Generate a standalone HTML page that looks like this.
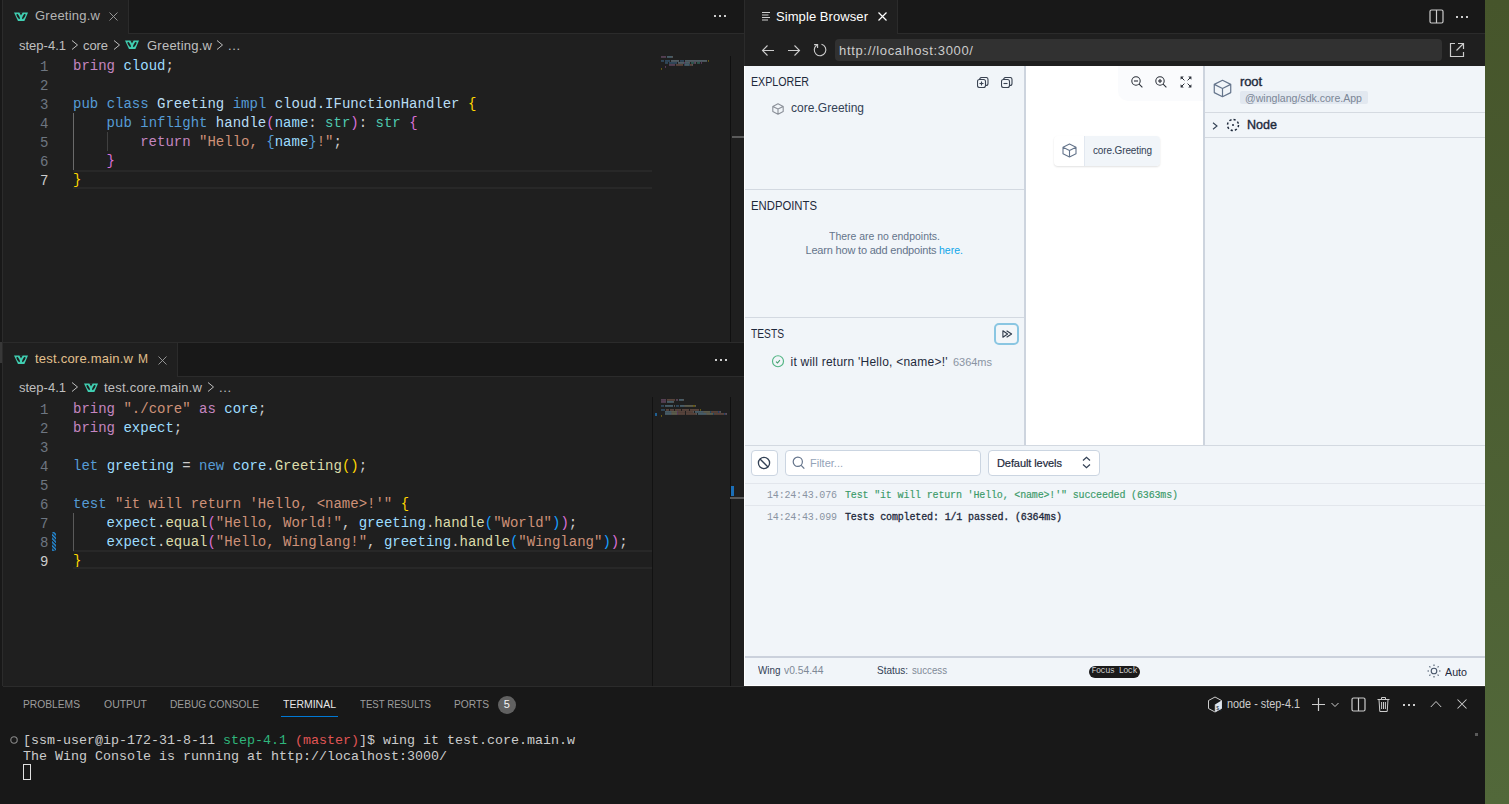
<!DOCTYPE html><html><head><meta charset="utf-8"><style>
html,body{margin:0;padding:0;width:1509px;height:804px;overflow:hidden;background:#1f1f1f;}
.t{position:absolute;white-space:pre;}
.r{position:absolute;}
</style></head><body>
<div class="r" style="left:0px;top:0px;width:744px;height:342px;background:#1f1f1f;"></div>
<div class="r" style="left:0px;top:0px;width:744px;height:33px;background:#181818;"></div>
<div class="r" style="left:128px;top:33px;width:616px;height:1px;background:#2b2b2b;"></div>
<div class="r" style="left:3px;top:0px;width:125px;height:33px;background:#1f1f1f;"></div>
<div class="r" style="left:128px;top:0px;width:1px;height:33px;background:#2b2b2b;"></div>
<div class="r" style="left:0px;top:342px;width:744px;height:344px;background:#1f1f1f;"></div>
<div class="r" style="left:0px;top:342px;width:744px;height:1px;background:#2b2b2b;"></div>
<div class="r" style="left:0px;top:343px;width:744px;height:33px;background:#181818;"></div>
<div class="r" style="left:177px;top:376px;width:567px;height:1px;background:#2b2b2b;"></div>
<div class="r" style="left:3px;top:343px;width:174px;height:33px;background:#1f1f1f;"></div>
<div class="r" style="left:177px;top:343px;width:1px;height:33px;background:#2b2b2b;"></div>
<div class="r" style="left:2px;top:0px;width:1px;height:804px;background:#2b2b2b;"></div>
<div class="r" style="left:0px;top:0px;width:2px;height:804px;background:#181818;"></div>
<div class="r" style="left:0px;top:342px;width:2px;height:21px;background:#383838;"></div>
<div class="r" style="left:744px;top:0px;width:1px;height:686px;background:#2b2b2b;"></div>
<div class="t" style="left:40px;top:57.97px;font-family:'Liberation Mono', monospace;font-size:14px;line-height:19.60px;color:#6e7681;font-weight:400;letter-spacing:0px;">1</div>
<div class="t" style="left:73px;top:57.17px;font-family:'Liberation Mono', monospace;font-size:14px;line-height:19.60px;color:#cccccc;font-weight:400;letter-spacing:0px;"><span style="color:#C586C0">bring</span><span style="color:#CCCCCC"> </span><span style="color:#9CDCFE">cloud</span><span style="color:#CCCCCC">;</span></div>
<div class="t" style="left:40px;top:76.97px;font-family:'Liberation Mono', monospace;font-size:14px;line-height:19.60px;color:#6e7681;font-weight:400;letter-spacing:0px;">2</div>
<div class="t" style="left:40px;top:95.97px;font-family:'Liberation Mono', monospace;font-size:14px;line-height:19.60px;color:#6e7681;font-weight:400;letter-spacing:0px;">3</div>
<div class="t" style="left:73px;top:95.17px;font-family:'Liberation Mono', monospace;font-size:14px;line-height:19.60px;color:#cccccc;font-weight:400;letter-spacing:0px;"><span style="color:#569CD6">pub</span><span style="color:#CCCCCC"> </span><span style="color:#569CD6">class</span><span style="color:#CCCCCC"> </span><span style="color:#B8DDF4">Greeting</span><span style="color:#CCCCCC"> </span><span style="color:#569CD6">impl</span><span style="color:#CCCCCC"> </span><span style="color:#B8DDF4">cloud.IFunctionHandler</span><span style="color:#CCCCCC"> </span><span style="color:#FFD700">{</span></div>
<div class="t" style="left:40px;top:114.97px;font-family:'Liberation Mono', monospace;font-size:14px;line-height:19.60px;color:#6e7681;font-weight:400;letter-spacing:0px;">4</div>
<div class="t" style="left:73px;top:114.17px;font-family:'Liberation Mono', monospace;font-size:14px;line-height:19.60px;color:#cccccc;font-weight:400;letter-spacing:0px;"><span style="color:#CCCCCC">    </span><span style="color:#569CD6">pub</span><span style="color:#CCCCCC"> </span><span style="color:#569CD6">inflight</span><span style="color:#CCCCCC"> </span><span style="color:#B8DDF4">handle</span><span style="color:#DA70D6">(</span><span style="color:#9CDCFE">name</span><span style="color:#CCCCCC">: </span><span style="color:#4EC9B0">str</span><span style="color:#DA70D6">)</span><span style="color:#CCCCCC">: </span><span style="color:#4EC9B0">str</span><span style="color:#CCCCCC"> </span><span style="color:#DA70D6">{</span></div>
<div class="t" style="left:40px;top:133.97px;font-family:'Liberation Mono', monospace;font-size:14px;line-height:19.60px;color:#6e7681;font-weight:400;letter-spacing:0px;">5</div>
<div class="t" style="left:73px;top:133.17px;font-family:'Liberation Mono', monospace;font-size:14px;line-height:19.60px;color:#cccccc;font-weight:400;letter-spacing:0px;"><span style="color:#CCCCCC">        </span><span style="color:#C586C0">return</span><span style="color:#CCCCCC"> </span><span style="color:#CE9178">&quot;Hello, </span><span style="color:#569CD6">{</span><span style="color:#9CDCFE">name</span><span style="color:#569CD6">}</span><span style="color:#CE9178">!&quot;</span><span style="color:#CCCCCC">;</span></div>
<div class="t" style="left:40px;top:152.97px;font-family:'Liberation Mono', monospace;font-size:14px;line-height:19.60px;color:#6e7681;font-weight:400;letter-spacing:0px;">6</div>
<div class="t" style="left:73px;top:152.17px;font-family:'Liberation Mono', monospace;font-size:14px;line-height:19.60px;color:#cccccc;font-weight:400;letter-spacing:0px;"><span style="color:#CCCCCC">    </span><span style="color:#DA70D6">}</span></div>
<div class="t" style="left:40px;top:171.97px;font-family:'Liberation Mono', monospace;font-size:14px;line-height:19.60px;color:#cccccc;font-weight:400;letter-spacing:0px;">7</div>
<div class="t" style="left:73px;top:171.17px;font-family:'Liberation Mono', monospace;font-size:14px;line-height:19.60px;color:#cccccc;font-weight:400;letter-spacing:0px;"><span style="color:#FFD700">}</span></div>
<div class="t" style="left:40px;top:400.97px;font-family:'Liberation Mono', monospace;font-size:14px;line-height:19.60px;color:#6e7681;font-weight:400;letter-spacing:0px;">1</div>
<div class="t" style="left:73px;top:400.17px;font-family:'Liberation Mono', monospace;font-size:14px;line-height:19.60px;color:#cccccc;font-weight:400;letter-spacing:0px;"><span style="color:#C586C0">bring</span><span style="color:#CCCCCC"> </span><span style="color:#CE9178">&quot;./core&quot;</span><span style="color:#CCCCCC"> </span><span style="color:#C586C0">as</span><span style="color:#CCCCCC"> </span><span style="color:#9CDCFE">core</span><span style="color:#CCCCCC">;</span></div>
<div class="t" style="left:40px;top:419.97px;font-family:'Liberation Mono', monospace;font-size:14px;line-height:19.60px;color:#6e7681;font-weight:400;letter-spacing:0px;">2</div>
<div class="t" style="left:73px;top:419.17px;font-family:'Liberation Mono', monospace;font-size:14px;line-height:19.60px;color:#cccccc;font-weight:400;letter-spacing:0px;"><span style="color:#C586C0">bring</span><span style="color:#CCCCCC"> </span><span style="color:#9CDCFE">expect</span><span style="color:#CCCCCC">;</span></div>
<div class="t" style="left:40px;top:438.97px;font-family:'Liberation Mono', monospace;font-size:14px;line-height:19.60px;color:#6e7681;font-weight:400;letter-spacing:0px;">3</div>
<div class="t" style="left:40px;top:457.97px;font-family:'Liberation Mono', monospace;font-size:14px;line-height:19.60px;color:#6e7681;font-weight:400;letter-spacing:0px;">4</div>
<div class="t" style="left:73px;top:457.17px;font-family:'Liberation Mono', monospace;font-size:14px;line-height:19.60px;color:#cccccc;font-weight:400;letter-spacing:0px;"><span style="color:#569CD6">let</span><span style="color:#CCCCCC"> </span><span style="color:#9CDCFE">greeting</span><span style="color:#CCCCCC"> = </span><span style="color:#569CD6">new</span><span style="color:#CCCCCC"> </span><span style="color:#9CDCFE">core</span><span style="color:#CCCCCC">.</span><span style="color:#DCDCAA">Greeting</span><span style="color:#FFD700">()</span><span style="color:#CCCCCC">;</span></div>
<div class="t" style="left:40px;top:476.97px;font-family:'Liberation Mono', monospace;font-size:14px;line-height:19.60px;color:#6e7681;font-weight:400;letter-spacing:0px;">5</div>
<div class="t" style="left:40px;top:495.97px;font-family:'Liberation Mono', monospace;font-size:14px;line-height:19.60px;color:#6e7681;font-weight:400;letter-spacing:0px;">6</div>
<div class="t" style="left:73px;top:495.17px;font-family:'Liberation Mono', monospace;font-size:14px;line-height:19.60px;color:#cccccc;font-weight:400;letter-spacing:0px;"><span style="color:#569CD6">test</span><span style="color:#CCCCCC"> </span><span style="color:#CE9178">&quot;it will return &#x27;Hello, &lt;name&gt;!&#x27;&quot;</span><span style="color:#CCCCCC"> </span><span style="color:#FFD700">{</span></div>
<div class="t" style="left:40px;top:514.97px;font-family:'Liberation Mono', monospace;font-size:14px;line-height:19.60px;color:#6e7681;font-weight:400;letter-spacing:0px;">7</div>
<div class="t" style="left:73px;top:514.17px;font-family:'Liberation Mono', monospace;font-size:14px;line-height:19.60px;color:#cccccc;font-weight:400;letter-spacing:0px;"><span style="color:#CCCCCC">    </span><span style="color:#9CDCFE">expect</span><span style="color:#CCCCCC">.</span><span style="color:#DCDCAA">equal</span><span style="color:#DA70D6">(</span><span style="color:#CE9178">&quot;Hello, World!&quot;</span><span style="color:#CCCCCC">, </span><span style="color:#9CDCFE">greeting</span><span style="color:#CCCCCC">.</span><span style="color:#DCDCAA">handle</span><span style="color:#179FFF">(</span><span style="color:#CE9178">&quot;World&quot;</span><span style="color:#179FFF">)</span><span style="color:#DA70D6">)</span><span style="color:#CCCCCC">;</span></div>
<div class="t" style="left:40px;top:533.97px;font-family:'Liberation Mono', monospace;font-size:14px;line-height:19.60px;color:#6e7681;font-weight:400;letter-spacing:0px;">8</div>
<div class="t" style="left:73px;top:533.17px;font-family:'Liberation Mono', monospace;font-size:14px;line-height:19.60px;color:#cccccc;font-weight:400;letter-spacing:0px;"><span style="color:#CCCCCC">    </span><span style="color:#9CDCFE">expect</span><span style="color:#CCCCCC">.</span><span style="color:#DCDCAA">equal</span><span style="color:#DA70D6">(</span><span style="color:#CE9178">&quot;Hello, Winglang!&quot;</span><span style="color:#CCCCCC">, </span><span style="color:#9CDCFE">greeting</span><span style="color:#CCCCCC">.</span><span style="color:#DCDCAA">handle</span><span style="color:#179FFF">(</span><span style="color:#CE9178">&quot;Winglang&quot;</span><span style="color:#179FFF">)</span><span style="color:#DA70D6">)</span><span style="color:#CCCCCC">;</span></div>
<div class="t" style="left:40px;top:552.97px;font-family:'Liberation Mono', monospace;font-size:14px;line-height:19.60px;color:#cccccc;font-weight:400;letter-spacing:0px;">9</div>
<div class="t" style="left:73px;top:552.17px;font-family:'Liberation Mono', monospace;font-size:14px;line-height:19.60px;color:#cccccc;font-weight:400;letter-spacing:0px;"><span style="color:#FFD700">}</span></div>
<svg class="r" style="left:14px;top:12px;" width="14" height="10" viewBox="0 0 14 10"><path fill="#40cfb2" d="M0,0.6 L14,0.6 L10.4,9.1 L4,9.1 Z"/><path fill="#1f1f1f" d="M5.2,0.3 L8.8,0.3 L7,3.4 Z"/><ellipse cx="4.2" cy="4.5" rx="1.05" ry="3.0" transform="rotate(-30 4.2 4.5)" fill="#1f1f1f"/><ellipse cx="9.8" cy="4.5" rx="1.05" ry="3.0" transform="rotate(30 9.8 4.5)" fill="#1f1f1f"/></svg>
<div class="t" style="left:35px;top:7.40px;font-family:'Liberation Sans', sans-serif;font-size:13px;line-height:18.20px;color:#b4b4b4;font-weight:400;letter-spacing:0.236px;">Greeting.w</div>
<svg class="r" style="left:109px;top:12px;" width="9" height="9" viewBox="0 0 9 9"><path d="M0.5,0.5 L8.5,8.5 M8.5,0.5 L0.5,8.5" stroke="#a0a0a0" stroke-width="0.9" fill="none"/></svg>
<div class="r" style="left:714px;top:15px;width:2px;height:2px;background:#cccccc;"></div>
<div class="r" style="left:719px;top:15px;width:2px;height:2px;background:#cccccc;"></div>
<div class="r" style="left:724px;top:15px;width:2px;height:2px;background:#cccccc;"></div>
<div class="t" style="left:19px;top:36.90px;font-family:'Liberation Sans', sans-serif;font-size:13px;line-height:18.20px;color:#bfbfbf;font-weight:400;letter-spacing:0.002px;">step-4.1</div>
<svg class="r" style="left:71px;top:40px;" width="8.0" height="10" viewBox="0 0 8.0 10"><path d="M1,0.5 L6.5,5.0 L1,9.5" stroke="#bfbfbf" stroke-width="1" fill="none"/></svg>
<div class="t" style="left:83px;top:36.90px;font-family:'Liberation Sans', sans-serif;font-size:13px;line-height:18.20px;color:#bfbfbf;font-weight:400;letter-spacing:-0.099px;">core</div>
<svg class="r" style="left:112.5px;top:40px;" width="8.0" height="10" viewBox="0 0 8.0 10"><path d="M1,0.5 L6.5,5.0 L1,9.5" stroke="#bfbfbf" stroke-width="1" fill="none"/></svg>
<svg class="r" style="left:125px;top:40px;" width="14" height="10" viewBox="0 0 14 10"><path fill="#40cfb2" d="M0,0.6 L14,0.6 L10.4,9.1 L4,9.1 Z"/><path fill="#1f1f1f" d="M5.2,0.3 L8.8,0.3 L7,3.4 Z"/><ellipse cx="4.2" cy="4.5" rx="1.05" ry="3.0" transform="rotate(-30 4.2 4.5)" fill="#1f1f1f"/><ellipse cx="9.8" cy="4.5" rx="1.05" ry="3.0" transform="rotate(30 9.8 4.5)" fill="#1f1f1f"/></svg>
<div class="t" style="left:147px;top:36.90px;font-family:'Liberation Sans', sans-serif;font-size:13px;line-height:18.20px;color:#bfbfbf;font-weight:400;letter-spacing:0.236px;">Greeting.w</div>
<svg class="r" style="left:215.5px;top:40px;" width="8.0" height="10" viewBox="0 0 8.0 10"><path d="M1,0.5 L6.5,5.0 L1,9.5" stroke="#bfbfbf" stroke-width="1" fill="none"/></svg>
<div class="t" style="left:228px;top:36.90px;font-family:'Liberation Sans', sans-serif;font-size:13px;line-height:18.20px;color:#bfbfbf;font-weight:400;letter-spacing:0.578px;">...</div>
<svg class="r" style="left:14px;top:355px;" width="14" height="10" viewBox="0 0 14 10"><path fill="#40cfb2" d="M0,0.6 L14,0.6 L10.4,9.1 L4,9.1 Z"/><path fill="#1f1f1f" d="M5.2,0.3 L8.8,0.3 L7,3.4 Z"/><ellipse cx="4.2" cy="4.5" rx="1.05" ry="3.0" transform="rotate(-30 4.2 4.5)" fill="#1f1f1f"/><ellipse cx="9.8" cy="4.5" rx="1.05" ry="3.0" transform="rotate(30 9.8 4.5)" fill="#1f1f1f"/></svg>
<div class="t" style="left:35px;top:350.40px;font-family:'Liberation Sans', sans-serif;font-size:13px;line-height:18.20px;color:#e2c08d;font-weight:400;letter-spacing:0.223px;">test.core.main.w</div>
<div class="t" style="left:138px;top:351.44px;font-family:'Liberation Sans', sans-serif;font-size:12px;line-height:16.80px;color:#e2c08d;font-weight:400;letter-spacing:0.0px;">M</div>
<svg class="r" style="left:158px;top:356px;" width="9" height="9" viewBox="0 0 9 9"><path d="M0.5,0.5 L8.5,8.5 M8.5,0.5 L0.5,8.5" stroke="#a0a0a0" stroke-width="0.9" fill="none"/></svg>
<div class="r" style="left:715px;top:359px;width:2px;height:2px;background:#cccccc;"></div>
<div class="r" style="left:720px;top:359px;width:2px;height:2px;background:#cccccc;"></div>
<div class="r" style="left:725px;top:359px;width:2px;height:2px;background:#cccccc;"></div>
<div class="t" style="left:19px;top:378.90px;font-family:'Liberation Sans', sans-serif;font-size:13px;line-height:18.20px;color:#bfbfbf;font-weight:400;letter-spacing:0.002px;">step-4.1</div>
<svg class="r" style="left:71px;top:382px;" width="8.0" height="10" viewBox="0 0 8.0 10"><path d="M1,0.5 L6.5,5.0 L1,9.5" stroke="#bfbfbf" stroke-width="1" fill="none"/></svg>
<svg class="r" style="left:84px;top:383px;" width="14" height="10" viewBox="0 0 14 10"><path fill="#40cfb2" d="M0,0.6 L14,0.6 L10.4,9.1 L4,9.1 Z"/><path fill="#1f1f1f" d="M5.2,0.3 L8.8,0.3 L7,3.4 Z"/><ellipse cx="4.2" cy="4.5" rx="1.05" ry="3.0" transform="rotate(-30 4.2 4.5)" fill="#1f1f1f"/><ellipse cx="9.8" cy="4.5" rx="1.05" ry="3.0" transform="rotate(30 9.8 4.5)" fill="#1f1f1f"/></svg>
<div class="t" style="left:104px;top:378.90px;font-family:'Liberation Sans', sans-serif;font-size:13px;line-height:18.20px;color:#bfbfbf;font-weight:400;letter-spacing:0.223px;">test.core.main.w</div>
<svg class="r" style="left:206.5px;top:382px;" width="8.0" height="10" viewBox="0 0 8.0 10"><path d="M1,0.5 L6.5,5.0 L1,9.5" stroke="#bfbfbf" stroke-width="1" fill="none"/></svg>
<div class="t" style="left:219px;top:378.90px;font-family:'Liberation Sans', sans-serif;font-size:13px;line-height:18.20px;color:#bfbfbf;font-weight:400;letter-spacing:0.578px;">...</div>
<div class="r" style="left:73px;top:170px;width:579px;height:2px;background:#282828;"></div>
<div class="r" style="left:73px;top:187px;width:579px;height:2px;background:#282828;"></div>
<div class="r" style="left:73px;top:550px;width:579px;height:2px;background:#282828;"></div>
<div class="r" style="left:73px;top:567px;width:579px;height:2px;background:#282828;"></div>
<div class="r" style="left:73px;top:113px;width:1px;height:57px;background:#6a6a6a;"></div>
<div class="r" style="left:107px;top:132px;width:1px;height:19px;background:#404040;"></div>
<div class="r" style="left:73px;top:513px;width:1px;height:38px;background:#5a5a5a;"></div>
<svg class="r" style="left:52px;top:532px;" width="4" height="19" viewBox="0 0 4 19"><defs><pattern id="st" width="2.6" height="2.6" patternUnits="userSpaceOnUse" patternTransform="rotate(-45)"><rect width="1.5" height="2.6" fill="#2389d6"/></pattern></defs><rect width="4" height="19" fill="url(#st)"/></svg>
<div class="r" style="left:730px;top:56px;width:14px;height:286px;background:#1f1f1f;box-shadow:inset 1px 0 0 #101010;"></div>
<div class="r" style="left:732px;top:136px;width:12px;height:2px;background:#5a5a5a;"></div>
<div class="r" style="left:652px;top:397px;width:1px;height:289px;background:#121212;"></div>
<div class="r" style="left:730px;top:397px;width:14px;height:289px;background:#1f1f1f;box-shadow:inset 1px 0 0 #101010;"></div>
<div class="r" style="left:731px;top:486px;width:3px;height:10px;background:#1b6fb8;"></div>
<div class="r" style="left:655px;top:413px;width:2px;height:3px;background:#1f5f92;"></div>
<div class="r" style="left:730px;top:497px;width:14px;height:2px;background:#5a5a5a;"></div>
<svg class="r" style="left:661px;top:56px;opacity:0.4;" width="80" height="14" viewBox="0 0 80 14"><rect x="0" y="0.2" width="5" height="1.5" fill="#C586C0"/><rect x="6" y="0.2" width="5" height="1.5" fill="#9CDCFE"/><rect x="11" y="0.2" width="1" height="1.5" fill="#CCCCCC"/><rect x="0" y="4.2" width="3" height="1.5" fill="#569CD6"/><rect x="4" y="4.2" width="5" height="1.5" fill="#569CD6"/><rect x="10" y="4.2" width="8" height="1.5" fill="#B8DDF4"/><rect x="19" y="4.2" width="4" height="1.5" fill="#569CD6"/><rect x="24" y="4.2" width="22" height="1.5" fill="#B8DDF4"/><rect x="47" y="4.2" width="1" height="1.5" fill="#FFD700"/><rect x="4" y="6.2" width="3" height="1.5" fill="#569CD6"/><rect x="8" y="6.2" width="8" height="1.5" fill="#569CD6"/><rect x="17" y="6.2" width="6" height="1.5" fill="#B8DDF4"/><rect x="23" y="6.2" width="1" height="1.5" fill="#DA70D6"/><rect x="24" y="6.2" width="4" height="1.5" fill="#9CDCFE"/><rect x="28" y="6.2" width="1" height="1.5" fill="#CCCCCC"/><rect x="30" y="6.2" width="3" height="1.5" fill="#4EC9B0"/><rect x="33" y="6.2" width="1" height="1.5" fill="#DA70D6"/><rect x="34" y="6.2" width="1" height="1.5" fill="#CCCCCC"/><rect x="36" y="6.2" width="3" height="1.5" fill="#4EC9B0"/><rect x="40" y="6.2" width="1" height="1.5" fill="#DA70D6"/><rect x="8" y="8.2" width="6" height="1.5" fill="#C586C0"/><rect x="15" y="8.2" width="7" height="1.5" fill="#CE9178"/><rect x="23" y="8.2" width="1" height="1.5" fill="#569CD6"/><rect x="24" y="8.2" width="4" height="1.5" fill="#9CDCFE"/><rect x="28" y="8.2" width="1" height="1.5" fill="#569CD6"/><rect x="29" y="8.2" width="2" height="1.5" fill="#CE9178"/><rect x="31" y="8.2" width="1" height="1.5" fill="#CCCCCC"/><rect x="4" y="10.2" width="1" height="1.5" fill="#DA70D6"/><rect x="0" y="12.2" width="1" height="1.5" fill="#FFD700"/></svg>
<svg class="r" style="left:661px;top:399px;opacity:0.4;" width="80" height="18" viewBox="0 0 80 18"><rect x="0" y="0.2" width="5" height="1.5" fill="#C586C0"/><rect x="6" y="0.2" width="8" height="1.5" fill="#CE9178"/><rect x="15" y="0.2" width="2" height="1.5" fill="#C586C0"/><rect x="18" y="0.2" width="4" height="1.5" fill="#9CDCFE"/><rect x="22" y="0.2" width="1" height="1.5" fill="#CCCCCC"/><rect x="0" y="2.2" width="5" height="1.5" fill="#C586C0"/><rect x="6" y="2.2" width="6" height="1.5" fill="#9CDCFE"/><rect x="12" y="2.2" width="1" height="1.5" fill="#CCCCCC"/><rect x="0" y="6.2" width="3" height="1.5" fill="#569CD6"/><rect x="4" y="6.2" width="8" height="1.5" fill="#9CDCFE"/><rect x="13" y="6.2" width="1" height="1.5" fill="#CCCCCC"/><rect x="15" y="6.2" width="3" height="1.5" fill="#569CD6"/><rect x="19" y="6.2" width="4" height="1.5" fill="#9CDCFE"/><rect x="23" y="6.2" width="1" height="1.5" fill="#CCCCCC"/><rect x="24" y="6.2" width="8" height="1.5" fill="#DCDCAA"/><rect x="32" y="6.2" width="2" height="1.5" fill="#FFD700"/><rect x="34" y="6.2" width="1" height="1.5" fill="#CCCCCC"/><rect x="0" y="10.2" width="4" height="1.5" fill="#569CD6"/><rect x="5" y="10.2" width="3" height="1.5" fill="#CE9178"/><rect x="9" y="10.2" width="4" height="1.5" fill="#CE9178"/><rect x="14" y="10.2" width="6" height="1.5" fill="#CE9178"/><rect x="21" y="10.2" width="7" height="1.5" fill="#CE9178"/><rect x="29" y="10.2" width="9" height="1.5" fill="#CE9178"/><rect x="39" y="10.2" width="1" height="1.5" fill="#FFD700"/><rect x="4" y="12.2" width="6" height="1.5" fill="#9CDCFE"/><rect x="10" y="12.2" width="1" height="1.5" fill="#CCCCCC"/><rect x="11" y="12.2" width="5" height="1.5" fill="#DCDCAA"/><rect x="16" y="12.2" width="1" height="1.5" fill="#DA70D6"/><rect x="17" y="12.2" width="7" height="1.5" fill="#CE9178"/><rect x="25" y="12.2" width="7" height="1.5" fill="#CE9178"/><rect x="32" y="12.2" width="1" height="1.5" fill="#CCCCCC"/><rect x="34" y="12.2" width="8" height="1.5" fill="#9CDCFE"/><rect x="42" y="12.2" width="1" height="1.5" fill="#CCCCCC"/><rect x="43" y="12.2" width="6" height="1.5" fill="#DCDCAA"/><rect x="49" y="12.2" width="1" height="1.5" fill="#179FFF"/><rect x="50" y="12.2" width="7" height="1.5" fill="#CE9178"/><rect x="57" y="12.2" width="1" height="1.5" fill="#179FFF"/><rect x="58" y="12.2" width="1" height="1.5" fill="#DA70D6"/><rect x="59" y="12.2" width="1" height="1.5" fill="#CCCCCC"/><rect x="4" y="14.2" width="6" height="1.5" fill="#9CDCFE"/><rect x="10" y="14.2" width="1" height="1.5" fill="#CCCCCC"/><rect x="11" y="14.2" width="5" height="1.5" fill="#DCDCAA"/><rect x="16" y="14.2" width="1" height="1.5" fill="#DA70D6"/><rect x="17" y="14.2" width="7" height="1.5" fill="#CE9178"/><rect x="25" y="14.2" width="10" height="1.5" fill="#CE9178"/><rect x="35" y="14.2" width="1" height="1.5" fill="#CCCCCC"/><rect x="37" y="14.2" width="8" height="1.5" fill="#9CDCFE"/><rect x="45" y="14.2" width="1" height="1.5" fill="#CCCCCC"/><rect x="46" y="14.2" width="6" height="1.5" fill="#DCDCAA"/><rect x="52" y="14.2" width="1" height="1.5" fill="#179FFF"/><rect x="53" y="14.2" width="10" height="1.5" fill="#CE9178"/><rect x="63" y="14.2" width="1" height="1.5" fill="#179FFF"/><rect x="64" y="14.2" width="1" height="1.5" fill="#DA70D6"/><rect x="65" y="14.2" width="1" height="1.5" fill="#CCCCCC"/><rect x="0" y="16.2" width="1" height="1.5" fill="#FFD700"/></svg>
<div class="r" style="left:0px;top:686px;width:1509px;height:118px;background:#181818;"></div>
<div class="r" style="left:3px;top:686px;width:1482px;height:1px;background:#2b2b2b;"></div>
<div class="t" style="left:23px;top:696.99px;font-family:'Liberation Sans', sans-serif;font-size:11px;line-height:15.40px;color:#9d9d9d;font-weight:400;letter-spacing:0px;transform:scaleX(0.9323);transform-origin:0 0;">PROBLEMS</div>
<div class="t" style="left:104px;top:696.99px;font-family:'Liberation Sans', sans-serif;font-size:11px;line-height:15.40px;color:#9d9d9d;font-weight:400;letter-spacing:0px;transform:scaleX(0.9506);transform-origin:0 0;">OUTPUT</div>
<div class="t" style="left:170px;top:696.99px;font-family:'Liberation Sans', sans-serif;font-size:11px;line-height:15.40px;color:#9d9d9d;font-weight:400;letter-spacing:0px;transform:scaleX(0.9274);transform-origin:0 0;">DEBUG CONSOLE</div>
<div class="t" style="left:283px;top:696.99px;font-family:'Liberation Sans', sans-serif;font-size:11px;line-height:15.40px;color:#e7e7e7;font-weight:400;letter-spacing:0px;transform:scaleX(0.9528);transform-origin:0 0;">TERMINAL</div>
<div class="r" style="left:281px;top:716px;width:57px;height:1px;background:#0078d4;"></div>
<div class="t" style="left:360px;top:696.99px;font-family:'Liberation Sans', sans-serif;font-size:11px;line-height:15.40px;color:#9d9d9d;font-weight:400;letter-spacing:0px;transform:scaleX(0.8777);transform-origin:0 0;">TEST RESULTS</div>
<div class="t" style="left:454px;top:696.99px;font-family:'Liberation Sans', sans-serif;font-size:11px;line-height:15.40px;color:#9d9d9d;font-weight:400;letter-spacing:0px;transform:scaleX(0.9283);transform-origin:0 0;">PORTS</div>
<div class="r" style="left:498px;top:696px;width:18px;height:18px;background:#616161;border-radius:9px;"></div>
<div class="t" style="left:503.8px;top:697.49px;font-family:'Liberation Sans', sans-serif;font-size:11px;line-height:15.40px;color:#f4f4f4;font-weight:400;letter-spacing:0px;">5</div>
<svg class="r" style="left:10px;top:736px;" width="8" height="8" viewBox="0 0 8 8"><circle cx="4" cy="4" r="3.2" fill="none" stroke="#8a8a8a" stroke-width="1.1"/></svg>
<div class="t" style="left:23px;top:732.11px;font-family:'Liberation Mono', monospace;font-size:13.333px;line-height:18.67px;color:#cccccc;font-weight:400;letter-spacing:0px;">[ssm-user@ip-172-31-8-11 <span style="color:#23d18b;color:#2fb67c">step-4.1</span> <span style="color:#f14c4c;color:#e05555">(master)</span>]$ wing it test.core.main.w</div>
<div class="t" style="left:23px;top:748.11px;font-family:'Liberation Mono', monospace;font-size:13.333px;line-height:18.67px;color:#cccccc;font-weight:400;letter-spacing:0px;">The Wing Console is running at http://localhost:3000/</div>
<div class="r" style="left:23px;top:764px;width:8px;height:16px;background:transparent;box-sizing:border-box;border:1px solid #e0e0e0;"></div>
<svg class="r" style="left:1207px;top:696px;" width="16" height="17" viewBox="0 0 16 17"><path d="M8,1 L14.5,4.5 L14.5,12.5 L8,16 L1.5,12.5 L1.5,4.5 Z" fill="none" stroke="#cccccc" stroke-width="1"/><path d="M8,8.5 L14.5,4.5 L14.5,12.5 L8,16 Z" fill="#dfe7f0"/><path d="M8,8.5 L8,16" stroke="#999" stroke-width="0.6"/><text x="9.3" y="14" font-size="5" fill="#234" font-family="Liberation Sans">$_</text></svg>
<div class="t" style="left:1227px;top:695.40px;font-family:'Liberation Sans', sans-serif;font-size:13px;line-height:18.20px;color:#cccccc;font-weight:400;letter-spacing:0px;transform:scaleX(0.8347);transform-origin:0 0;">node - step-4.1</div>
<svg class="r" style="left:1311px;top:697px;" width="15" height="15" viewBox="0 0 15 15"><path d="M7.5,1 V14 M1,7.5 H14" stroke="#cccccc" stroke-width="1.2" fill="none"/></svg>
<svg class="r" style="left:1331px;top:702px;" width="8" height="6" viewBox="0 0 8 6"><path d="M0.5,1 L4,4.5 L7.5,1" stroke="#cccccc" stroke-width="1" fill="none"/></svg>
<svg class="r" style="left:1351px;top:697px;" width="15" height="15" viewBox="0 0 15 15"><rect x="1" y="1" width="13" height="13" rx="1.5" fill="none" stroke="#cccccc" stroke-width="1.2"/><path d="M7.5,1 V14" stroke="#cccccc" stroke-width="1.2"/></svg>
<svg class="r" style="left:1377px;top:696px;" width="13" height="17" viewBox="0 0 13 17"><path d="M0.5,3.5 H12.5 M4.5,3.5 V1.5 H8.5 V3.5 M2,3.5 L2.8,15.5 H10.2 L11,3.5 M4.6,6 V13 M6.5,6 V13 M8.4,6 V13" stroke="#cccccc" stroke-width="1" fill="none"/></svg>
<div class="r" style="left:1403px;top:704px;width:2px;height:2px;background:#cccccc;"></div>
<div class="r" style="left:1408px;top:704px;width:2px;height:2px;background:#cccccc;"></div>
<div class="r" style="left:1413px;top:704px;width:2px;height:2px;background:#cccccc;"></div>
<svg class="r" style="left:1430px;top:700px;" width="12" height="8" viewBox="0 0 12 8"><path d="M0.8,7 L6,1.5 L11.2,7" stroke="#cccccc" stroke-width="1" fill="none"/></svg>
<svg class="r" style="left:1457px;top:699px;" width="10" height="10" viewBox="0 0 10 10"><path d="M0.5,0.5 L9.5,9.5 M9.5,0.5 L0.5,9.5" stroke="#cccccc" stroke-width="1.05" fill="none"/></svg>
<div class="r" style="left:1475px;top:733px;width:3px;height:3px;background:#5a5a5a;"></div>
<div class="r" style="left:745px;top:0px;width:740px;height:33px;background:#181818;"></div>
<div class="r" style="left:745px;top:0px;width:152px;height:33px;background:#1f1f1f;"></div>
<div class="r" style="left:897px;top:0px;width:1px;height:33px;background:#2b2b2b;"></div>
<div class="r" style="left:897px;top:33px;width:588px;height:1px;background:#2b2b2b;"></div>
<div class="r" style="left:745px;top:34px;width:740px;height:32px;background:#1f1f1f;"></div>
<svg class="r" style="left:762px;top:11px;" width="9" height="10" viewBox="0 0 9 10"><path d="M0,1.5 H8 M0,4 H6.5 M0,6.5 H8 M0,9 H6" stroke="#d0d0d0" stroke-width="1" fill="none"/></svg>
<div class="t" style="left:776px;top:7.60px;font-family:'Liberation Sans', sans-serif;font-size:13px;line-height:18.20px;color:#ffffff;font-weight:400;letter-spacing:0.075px;">Simple Browser</div>
<svg class="r" style="left:878px;top:12px;" width="9" height="9" viewBox="0 0 9 9"><path d="M0.5,0.5 L8.5,8.5 M8.5,0.5 L0.5,8.5" stroke="#ffffff" stroke-width="1.2" fill="none"/></svg>
<svg class="r" style="left:1429px;top:9px;" width="15" height="15" viewBox="0 0 15 15"><rect x="1" y="1" width="13" height="13" rx="1.5" fill="none" stroke="#cccccc" stroke-width="1.2"/><path d="M7.5,1 V14" stroke="#cccccc" stroke-width="1.2"/></svg>
<div class="r" style="left:1456px;top:16px;width:2px;height:2px;background:#cccccc;"></div>
<div class="r" style="left:1461px;top:16px;width:2px;height:2px;background:#cccccc;"></div>
<div class="r" style="left:1466px;top:16px;width:2px;height:2px;background:#cccccc;"></div>
<svg class="r" style="left:761px;top:44px;" width="14" height="13" viewBox="0 0 14 13"><path d="M13,6.5 H1.5 M6.5,1.5 L1.5,6.5 L6.5,11.5" stroke="#cccccc" stroke-width="1.1" fill="none"/></svg>
<svg class="r" style="left:787px;top:44px;" width="14" height="13" viewBox="0 0 14 13"><path d="M1,6.5 H12.5 M7.5,1.5 L12.5,6.5 L7.5,11.5" stroke="#cccccc" stroke-width="1.1" fill="none"/></svg>
<svg class="r" style="left:813px;top:42.7px;" width="15" height="15" viewBox="0 0 15 15"><path d="M8.5,1.3 A5.8,5.8 0 1 1 3.7,2.2 M1.1,1.6 H4.6 V5" stroke="#cccccc" stroke-width="1.1" fill="none"/></svg>
<div class="r" style="left:835px;top:39px;width:607px;height:22px;background:#313131;border-radius:4px;"></div>
<div class="t" style="left:839px;top:41.90px;font-family:'Liberation Sans', sans-serif;font-size:13px;line-height:18.20px;color:#cccccc;font-weight:400;letter-spacing:0.667px;">http://localhost:3000/</div>
<svg class="r" style="left:1449px;top:42px;" width="16" height="16" viewBox="0 0 16 16"><path d="M6,1.5 H1.5 V14.5 H14.5 V10 M9,1.5 H14.5 V7 M14.5,1.5 L7.5,8.5" stroke="#cccccc" stroke-width="1.2" fill="none"/></svg>
<div class="r" style="left:744px;top:66px;width:741px;height:620px;background:#f1f5f9;"></div>
<div class="r" style="left:1026px;top:66px;width:177px;height:379px;background:#ffffff;"></div>
<div class="r" style="left:1024px;top:66px;width:2px;height:379px;background:#cdd4de;"></div>
<div class="r" style="left:1203px;top:66px;width:2px;height:379px;background:#cdd4de;"></div>
<div class="r" style="left:744px;top:189px;width:280px;height:1px;background:#d3d9e1;"></div>
<div class="r" style="left:744px;top:317px;width:280px;height:1px;background:#d3d9e1;"></div>
<div class="r" style="left:744px;top:445px;width:741px;height:1px;background:#d3d9e1;"></div>
<div class="r" style="left:1205px;top:112px;width:280px;height:1px;background:#d5dae1;"></div>
<div class="r" style="left:1205px;top:137px;width:280px;height:1px;background:#d5dae1;"></div>
<div class="r" style="left:744px;top:483px;width:741px;height:1px;background:#e2e6ec;"></div>
<div class="r" style="left:744px;top:505px;width:741px;height:1px;background:#e2e6ec;"></div>
<div class="r" style="left:744px;top:656px;width:741px;height:2px;background:#cbd1dc;"></div>
<div class="r" style="left:744px;top:66px;width:1px;height:620px;background:#ffffff;"></div>
<div class="r" style="left:744px;top:685px;width:741px;height:1px;background:#ffffff;"></div>
<div class="t" style="left:751px;top:73.54px;font-family:'Liberation Sans', sans-serif;font-size:12px;line-height:16.80px;color:#1e293b;font-weight:400;letter-spacing:0px;transform:scaleX(0.8874);transform-origin:0 0;">EXPLORER</div>
<svg class="r" style="left:976.5px;top:76.5px;" width="12" height="12" viewBox="0 0 12 12"><rect x="0.5" y="2.5" width="8" height="8" rx="2" fill="none" stroke="#3a4352" stroke-width="1.1"/><path d="M2.6,2.5 A2,2 0 0 1 4.6,0.5 H9 A2,2 0 0 1 11,2.5 V6.5 A2,2 0 0 1 9,8.5 H8.5" fill="none" stroke="#3a4352" stroke-width="1.1"/><path d="M2.5,6.5 H6.5" stroke="#3a4352" stroke-width="1.1"/><path d="M4.5,4.5 V8.5" stroke="#3a4352" stroke-width="1.1"/></svg>
<svg class="r" style="left:1001px;top:76.5px;" width="12" height="12" viewBox="0 0 12 12"><rect x="0.5" y="2.5" width="8" height="8" rx="2" fill="none" stroke="#3a4352" stroke-width="1.1"/><path d="M2.6,2.5 A2,2 0 0 1 4.6,0.5 H9 A2,2 0 0 1 11,2.5 V6.5 A2,2 0 0 1 9,8.5 H8.5" fill="none" stroke="#3a4352" stroke-width="1.1"/><path d="M2.5,6.5 H6.5" stroke="#3a4352" stroke-width="1.1"/></svg>
<svg class="r" style="left:772px;top:103px;" width="12" height="12" viewBox="0 0 12 12"><g transform="scale(1.0)"><path d="M6,0.8 L11.2,3.4 V8.6 L6,11.2 L0.8,8.6 V3.4 Z M0.8,3.4 L6,6 L11.2,3.4 M6,6 V11.2" fill="none" stroke="#8b9099" stroke-width="1.10" stroke-linejoin="round"/></g></svg>
<div class="t" style="left:791px;top:99.94px;font-family:'Liberation Sans', sans-serif;font-size:12px;line-height:16.80px;color:#334155;font-weight:400;letter-spacing:0.025px;">core.Greeting</div>
<div class="t" style="left:751px;top:197.94px;font-family:'Liberation Sans', sans-serif;font-size:12px;line-height:16.80px;color:#1e293b;font-weight:400;letter-spacing:0px;transform:scaleX(0.9426);transform-origin:0 0;">ENDPOINTS</div>
<div class="t" style="left:828.5px;top:228.79px;font-family:'Liberation Sans', sans-serif;font-size:11px;line-height:15.40px;color:#64748b;font-weight:400;letter-spacing:0px;transform:scaleX(0.9502);transform-origin:0 0;">There are no endpoints.</div>
<div class="t" style="left:805.5px;top:242.99px;font-family:'Liberation Sans', sans-serif;font-size:11px;line-height:15.40px;color:#64748b;font-weight:400;letter-spacing:-0.191px;">Learn how to add endpoints</div>
<div class="t" style="left:938.5px;top:242.99px;font-family:'Liberation Sans', sans-serif;font-size:11px;line-height:15.40px;color:#0ea5e9;font-weight:400;letter-spacing:0px;transform:scaleX(0.9570);transform-origin:0 0;">here.</div>
<div class="t" style="left:751px;top:325.94px;font-family:'Liberation Sans', sans-serif;font-size:12px;line-height:16.80px;color:#1e293b;font-weight:400;letter-spacing:0px;transform:scaleX(0.8533);transform-origin:0 0;">TESTS</div>
<div class="r" style="left:994px;top:323px;width:25px;height:22px;background:#f3f6f9;box-sizing:border-box;border:2px solid #8ac6e2;border-radius:5px;"></div>
<svg class="r" style="left:1002px;top:330px;" width="11" height="8" viewBox="0 0 11 8"><path d="M0.9,0.8 L5.6,4 L0.9,7.2 Z M4.6,0.8 L9.6,4 L4.6,7.2" fill="none" stroke="#2f3a4a" stroke-width="1.1" stroke-linejoin="round"/></svg>
<svg class="r" style="left:771px;top:355px;" width="14" height="14" viewBox="0 0 14 14"><circle cx="7" cy="6.2" r="5.5" fill="none" stroke="#52b584" stroke-width="1.15"/><path d="M5,6.6 L6.5,8 L8.9,5.2" fill="none" stroke="#3f9a6a" stroke-width="1.05"/></svg>
<div class="t" style="left:790.5px;top:353.74px;font-family:'Liberation Sans', sans-serif;font-size:12px;line-height:16.80px;color:#1e293b;font-weight:400;letter-spacing:0.234px;">it will return &#x27;Hello, &lt;name&gt;!&#x27;</div>
<div class="t" style="left:953px;top:354.79px;font-family:'Liberation Sans', sans-serif;font-size:11px;line-height:15.40px;color:#8a94a3;font-weight:400;letter-spacing:-0.028px;">6364ms</div>
<div class="r" style="left:1118px;top:66px;width:85px;height:35px;background:#fafbfd;border-radius:0 0 0 10px;"></div>
<svg class="r" style="left:1131px;top:76px;" width="12" height="12" viewBox="0 0 12 12"><circle cx="5" cy="5" r="4.2" fill="none" stroke="#2a2f38" stroke-width="1.05"/><path d="M8.1,8.1 L11.4,11.4" stroke="#2a2f38" stroke-width="1.05"/><path d="M3,5 H7" stroke="#2a2f38" stroke-width="1.1"/></svg>
<svg class="r" style="left:1155px;top:76px;" width="12" height="12" viewBox="0 0 12 12"><circle cx="5" cy="5" r="4.2" fill="none" stroke="#2a2f38" stroke-width="1.05"/><path d="M8.1,8.1 L11.4,11.4" stroke="#2a2f38" stroke-width="1.05"/><path d="M3,5 H7" stroke="#2a2f38" stroke-width="1.1"/><path d="M5,3 V7" stroke="#2a2f38" stroke-width="1.1"/></svg>
<svg class="r" style="left:1180px;top:76px;" width="12" height="12" viewBox="0 0 12 12"><g fill="#2a2f38"><path d="M0.6,0.6 H3.8 L0.6,3.8 Z M11.4,0.6 V3.8 L8.2,0.6 Z M0.6,11.4 V8.2 L3.8,11.4 Z M11.4,11.4 H8.2 L11.4,8.2 Z"/></g><path d="M1.5,1.5 L4.4,4.4 M10.5,1.5 L7.6,4.4 M1.5,10.5 L4.4,7.6 M10.5,10.5 L7.6,7.6" stroke="#2a2f38" stroke-width="1"/></svg>
<div class="r" style="left:1054px;top:136px;width:106px;height:30px;background:#ffffff;border-radius:4px;box-shadow:0 1px 2px rgba(0,0,0,0.12);"></div>
<div class="r" style="left:1084px;top:136px;width:76px;height:30px;background:#f1f5f9;border-radius:0 4px 4px 0;"></div>
<div class="r" style="left:1084px;top:136px;width:1px;height:30px;background:#e2e8f0;"></div>
<svg class="r" style="left:1062px;top:143px;" width="15" height="15" viewBox="0 0 15 15"><g transform="scale(1.25)"><path d="M6,0.8 L11.2,3.4 V8.6 L6,11.2 L0.8,8.6 V3.4 Z M0.8,3.4 L6,6 L11.2,3.4 M6,6 V11.2" fill="none" stroke="#64748b" stroke-width="0.88" stroke-linejoin="round"/></g></svg>
<div class="t" style="left:1093px;top:144.03px;font-family:'Liberation Sans', sans-serif;font-size:10px;line-height:14.00px;color:#334155;font-weight:400;letter-spacing:-0.133px;">core.Greeting</div>
<svg class="r" style="left:1213px;top:79px;" width="19" height="19" viewBox="0 0 19 19"><g transform="scale(1.5833333333333333)"><path d="M6,0.8 L11.2,3.4 V8.6 L6,11.2 L0.8,8.6 V3.4 Z M0.8,3.4 L6,6 L11.2,3.4 M6,6 V11.2" fill="none" stroke="#64748b" stroke-width="0.76" stroke-linejoin="round"/></g></svg>
<div class="t" style="left:1240px;top:72.70px;font-family:'Liberation Sans', sans-serif;font-size:13px;line-height:18.20px;color:#1e293b;font-weight:400;letter-spacing:-0.135px;-webkit-text-stroke:0.4px #1e293b;">root</div>
<div class="r" style="left:1240px;top:91px;width:128px;height:13px;background:#e2e8f0;border-radius:2px;"></div>
<div class="t" style="left:1245px;top:90.69px;font-family:'Liberation Sans', sans-serif;font-size:11px;line-height:15.40px;color:#7b8696;font-weight:400;letter-spacing:0px;transform:scaleX(0.9602);transform-origin:0 0;">@winglang/sdk.core.App</div>
<svg class="r" style="left:1212px;top:121.5px;" width="7" height="8" viewBox="0 0 7 8"><path d="M1,0.8 L5,4 L1,7.2" stroke="#334155" stroke-width="1.1" fill="none"/></svg>
<svg class="r" style="left:1226px;top:118px;" width="14" height="14" viewBox="0 0 14 14"><circle cx="7" cy="7" r="5.5" fill="none" stroke="#1e293b" stroke-width="1.5" stroke-dasharray="2.2 2.1"/><circle cx="7" cy="7" r="1" fill="#1e293b"/></svg>
<div class="t" style="left:1247px;top:115.50px;font-family:'Liberation Sans', sans-serif;font-size:13px;line-height:18.20px;color:#1e293b;font-weight:400;letter-spacing:0px;-webkit-text-stroke:0.4px #1e293b;transform:scaleX(0.9653);transform-origin:0 0;">Node</div>
<div class="r" style="left:751px;top:450px;width:27px;height:26px;background:#ffffff;box-sizing:border-box;border:1px solid #cbd5e1;border-radius:4px;"></div>
<svg class="r" style="left:757px;top:456px;" width="14" height="14" viewBox="0 0 14 14"><circle cx="7" cy="7" r="5.6" fill="none" stroke="#334155" stroke-width="1.3"/><path d="M3,3 L11,11" stroke="#334155" stroke-width="1.3"/></svg>
<div class="r" style="left:785px;top:450px;width:196px;height:26px;background:#ffffff;box-sizing:border-box;border:1px solid #cbd5e1;border-radius:4px;"></div>
<svg class="r" style="left:792px;top:456px;" width="13" height="14" viewBox="0 0 13 14"><circle cx="5.8" cy="5.8" r="4.6" fill="none" stroke="#64748b" stroke-width="1.2"/><path d="M9.2,9.3 L12.3,12.6" stroke="#64748b" stroke-width="1.2"/></svg>
<div class="t" style="left:810px;top:455.99px;font-family:'Liberation Sans', sans-serif;font-size:11px;line-height:15.40px;color:#94a3b8;font-weight:400;letter-spacing:-0.002px;">Filter...</div>
<div class="r" style="left:988px;top:450px;width:112px;height:26px;background:#ffffff;box-sizing:border-box;border:1px solid #cbd5e1;border-radius:4px;"></div>
<div class="t" style="left:997px;top:455.99px;font-family:'Liberation Sans', sans-serif;font-size:11px;line-height:15.40px;color:#1e293b;font-weight:400;letter-spacing:-0.081px;-webkit-text-stroke:0.2px #1e293b;">Default levels</div>
<svg class="r" style="left:1081.5px;top:456px;" width="9" height="13" viewBox="0 0 9 13"><path d="M1,4.5 L4.5,1.2 L8,4.5 M1,8.5 L4.5,11.8 L8,8.5" stroke="#334155" stroke-width="1.2" fill="none"/></svg>
<div class="t" style="left:767px;top:488.83px;font-family:'Liberation Mono', monospace;font-size:10px;line-height:14.00px;color:#8a94a3;font-weight:400;letter-spacing:-0.183px;">14:24:43.076</div>
<div class="t" style="left:845px;top:488.83px;font-family:'Liberation Mono', monospace;font-size:10px;line-height:14.00px;color:#3a9a68;font-weight:400;letter-spacing:-0.162px;-webkit-text-stroke:0.15px #3a9a68;">Test &quot;it will return &#x27;Hello, &lt;name&gt;!&#x27;&quot; succeeded (6363ms)</div>
<div class="t" style="left:767px;top:510.83px;font-family:'Liberation Mono', monospace;font-size:10px;line-height:14.00px;color:#8a94a3;font-weight:400;letter-spacing:-0.183px;">14:24:43.099</div>
<div class="t" style="left:845px;top:510.83px;font-family:'Liberation Mono', monospace;font-size:10px;line-height:14.00px;color:#1e293b;font-weight:400;letter-spacing:-0.14px;-webkit-text-stroke:0.3px #1e293b;">Tests completed: 1/1 passed. (6364ms)</div>
<div class="t" style="left:757.5px;top:662.59px;font-family:'Liberation Sans', sans-serif;font-size:11px;line-height:15.40px;color:#334155;font-weight:400;letter-spacing:0px;transform:scaleX(0.8978);transform-origin:0 0;">Wing</div>
<div class="t" style="left:783.5px;top:662.59px;font-family:'Liberation Sans', sans-serif;font-size:11px;line-height:15.40px;color:#7f8997;font-weight:400;letter-spacing:0px;transform:scaleX(0.9359);transform-origin:0 0;">v0.54.44</div>
<div class="t" style="left:877px;top:662.59px;font-family:'Liberation Sans', sans-serif;font-size:11px;line-height:15.40px;color:#334155;font-weight:400;letter-spacing:0px;transform:scaleX(0.9051);transform-origin:0 0;">Status:</div>
<div class="t" style="left:911.5px;top:662.59px;font-family:'Liberation Sans', sans-serif;font-size:11px;line-height:15.40px;color:#7f8997;font-weight:400;letter-spacing:0px;transform:scaleX(0.8805);transform-origin:0 0;">success</div>
<div class="r" style="left:1089px;top:666px;width:51px;height:12px;background:#1a1a1a;border-radius:6px;"></div>
<div class="t" style="left:1091.5px;top:666.48px;font-family:'Liberation Mono', monospace;font-size:8.5px;line-height:11.90px;color:#d0d0d0;font-weight:400;letter-spacing:-0.557px;">Focus Lock</div>
<svg class="r" style="left:1427px;top:664px;" width="14" height="14" viewBox="0 0 14 14"><circle cx="7" cy="7" r="2.8" fill="none" stroke="#475569" stroke-width="1.1"/><path d="M7,0.5 V2 M7,12 V13.5 M0.5,7 H2 M12,7 H13.5 M2.4,2.4 L3.4,3.4 M10.6,10.6 L11.6,11.6 M2.4,11.6 L3.4,10.6 M10.6,3.4 L11.6,2.4" stroke="#475569" stroke-width="1.1"/></svg>
<div class="t" style="left:1445px;top:664.99px;font-family:'Liberation Sans', sans-serif;font-size:11px;line-height:15.40px;color:#1e293b;font-weight:400;letter-spacing:0px;transform:scaleX(0.9717);transform-origin:0 0;">Auto</div>
<div class="r" style="left:1485px;top:0px;width:24px;height:804px;background:linear-gradient(#46552b,#52683a);"></div>
</body></html>
